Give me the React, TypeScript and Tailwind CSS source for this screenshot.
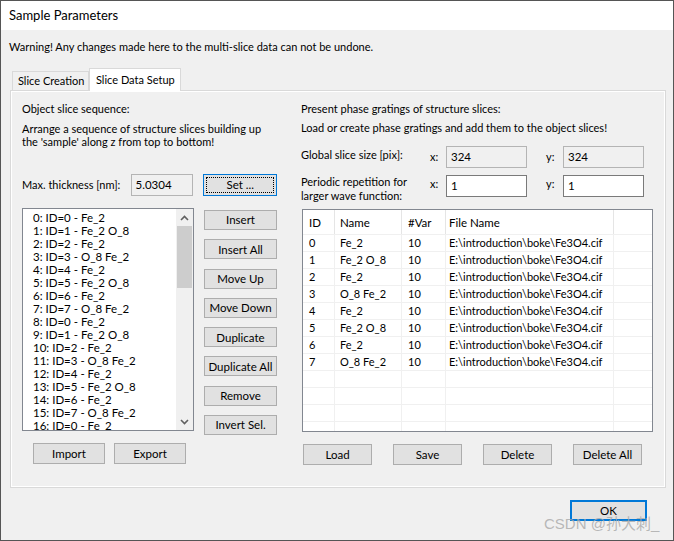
import React from 'react';

const seq = ['Fe_2', 'Fe_2 O_8', 'Fe_2', 'O_8 Fe_2', 'Fe_2', 'Fe_2 O_8', 'Fe_2', 'O_8 Fe_2'];

const sliceItems = Array.from({ length: 17 }, (_, i) => `${i}: ID=${i % 8} - ${seq[i % 8]}`);

const gratings = seq.map((name, i) => ({
  id: i,
  name,
  nvar: 10,
  file: 'E:\\introduction\\boke\\Fe3O4.cif',
}));

const Btn = ({ label, className = '' }: { label: string; className?: string }) => (
  <div
    className={`flex items-center justify-center whitespace-nowrap border border-[#adadad] bg-[#e1e1e1] text-[11.5px] text-black ${className}`}
  >
    {label}
  </div>
);

const Field = ({ value, readOnly = false, className = '' }: { value: string; readOnly?: boolean; className?: string }) => (
  <div
    className={`flex items-center border px-[4px] text-[11.5px] ${
      readOnly ? 'border-[#b4b4b4] bg-[#f0f0f0]' : 'border-[#7a7a7a] bg-white'
    } ${className}`}
  >
    {value}
  </div>
);

const Chevron = ({ up }: { up: boolean }) => (
  <svg width="9" height="6" viewBox="0 0 9 6">
    <path
      d={up ? 'M1 5 L4.5 1.5 L8 5' : 'M1 1 L4.5 4.5 L8 1'}
      fill="none"
      stroke="#606060"
      strokeWidth="1.6"
    />
  </svg>
);

export default function App() {
  return (
    <div className="relative flex h-[541px] w-[674px] flex-col border border-[#555] bg-[#f0f0f0] text-black [font-family:Lato,'Liberation_Sans',sans-serif]">
      {/* title bar */}
      <div className="flex h-[29px] items-center bg-white pl-[8px] text-[13px]">Sample Parameters</div>

      <div className="mt-[9px] whitespace-nowrap pl-[8px] text-[11px] leading-[16px]">
        Warning! Any changes made here to the multi-slice data can not be undone.
      </div>

      {/* tabs */}
      <div className="ml-[11px] mt-[13px] flex items-end whitespace-nowrap text-[11px]">
        <div className="flex h-[19px] w-[77px] items-center border border-b-0 border-[#d9d9d9] pl-[5px]">
          Slice Creation
        </div>
        <div className="relative z-10 -mb-px flex h-[23px] w-[92px] items-center border border-b-0 border-[#d9d9d9] bg-white pl-[6px]">
          Slice Data Setup
        </div>
      </div>

      {/* tab page */}
      <div className="ml-[9px] flex h-[398px] w-[656px] border border-[#d9d9d9] shadow-[inset_1px_1px_0_#fff,inset_-1px_-1px_0_#fff]">
        {/* left column */}
        <div className="ml-[11px] flex w-[255px] flex-col whitespace-nowrap pt-[10px] text-[11px]">
          <div className="leading-[16px]">Object slice sequence:</div>
          <div className="mt-[5px] leading-[13px]">
            Arrange a sequence of structure slices building up
            <br />
            the 'sample' along z from top to bottom!
          </div>
          <div className="mt-[26px] flex items-center">
            <div className="w-[109px]">Max. thickness [nm]:</div>
            <Field value="5.0304" readOnly className="h-[22px] w-[63px]" />
            <div className="ml-[10px] flex h-[22px] w-[74px] items-center justify-center border border-[#0078d7] bg-[#e1e1e1] p-[2px]">
              <div className="flex h-full w-full items-center justify-center border border-dotted border-black text-[11.5px]">
                Set ...
              </div>
            </div>
          </div>

          <div className="mt-[12px] flex h-[223px] items-start">
            <div className="flex h-[223px] w-[172px] border border-[#828790] bg-white">
              <div className="flex-1 overflow-hidden pl-[10px] pt-[2px] text-[11.5px] leading-[13px]">
                {sliceItems.map((s) => (
                  <div key={s} className="whitespace-nowrap">
                    {s}
                  </div>
                ))}
              </div>
              <div className="flex w-[17px] flex-col bg-[#f0f0f0]">
                <div className="flex h-[17px] items-center justify-center">
                  <Chevron up />
                </div>
                <div className="mx-[1px] h-[62px] bg-[#cdcdcd]" />
                <div className="flex-1" />
                <div className="flex h-[17px] items-center justify-center">
                  <Chevron up={false} />
                </div>
              </div>
            </div>
            <div className="ml-[10px] mt-[2px] flex flex-col gap-[9.3px]">
              {['Insert', 'Insert All', 'Move Up', 'Move Down', 'Duplicate', 'Duplicate All', 'Remove', 'Invert Sel.'].map(
                (b) => (
                  <Btn key={b} label={b} className="h-[20px] w-[73px]" />
                ),
              )}
            </div>
          </div>

          <div className="ml-[11px] mt-[12px] flex gap-[9px]">
            <Btn label="Import" className="h-[21px] w-[72px]" />
            <Btn label="Export" className="h-[21px] w-[72px]" />
          </div>
        </div>

        {/* right column */}
        <div className="ml-[24px] flex w-[352px] flex-col whitespace-nowrap pt-[10px] text-[11px]">
          <div className="leading-[16px]">Present phase gratings of structure slices:</div>
          <div className="mt-[3px] leading-[16px]">Load or create phase gratings and add them to the object slices!</div>

          <div className="mt-[10px] flex h-[22px] items-center">
            <div className="-mt-[3px] w-[129px]">Global slice size [pix]:</div>
            <div className="w-[16px]">x:</div>
            <Field value="324" readOnly className="h-[22px] w-[81px]" />
            <div className="ml-[19px] w-[17px]">y:</div>
            <Field value="324" readOnly className="h-[22px] w-[81px]" />
          </div>

          <div className="mt-[7px] flex h-[22px] items-start">
            <div className="w-[129px] leading-[14px]">
              Periodic repetition for
              <br />
              larger wave function:
            </div>
            <div className="mt-[1px] w-[16px]">x:</div>
            <Field value="1" className="h-[22px] w-[81px]" />
            <div className="ml-[19px] mt-[1px] w-[17px]">y:</div>
            <Field value="1" className="h-[22px] w-[81px]" />
          </div>

          <div className="ml-[1px] mt-[12px] h-[223px] w-[351px] overflow-hidden border border-[#828790] bg-white">
            <div className="flex h-[25px] items-center border-b border-[#f0f0f0] text-[11.5px]">
              <div className="h-full w-[32px] border-r border-[#e5e5e5] pl-[6px] leading-[25px]">ID</div>
              <div className="h-full w-[67px] border-r border-[#e5e5e5] pl-[5px] leading-[25px]">Name</div>
              <div className="h-full w-[44px] border-r border-[#e5e5e5] pl-[6px] leading-[25px]">#Var</div>
              <div className="h-full w-[168px] border-r border-[#e5e5e5] pl-[3px] leading-[25px]">File Name</div>
            </div>
            {Array.from({ length: 12 }, (_, i) => {
              const g = gratings[i];
              return (
                <div key={i} className="flex h-[17px] border-b border-[#f0f0f0] text-[11px] leading-[16px]">
                  <div className="w-[32px] border-r border-[#f0f0f0] pl-[6px]">{g ? g.id : ''}</div>
                  <div className="w-[67px] border-r border-[#f0f0f0] pl-[5px]">{g ? g.name : ''}</div>
                  <div className="w-[44px] border-r border-[#f0f0f0] pl-[6px]">{g ? g.nvar : ''}</div>
                  <div className="w-[168px] border-r border-[#f0f0f0] pl-[3px]">{g ? g.file : ''}</div>
                </div>
              );
            })}
          </div>

          <div className="ml-[2px] mt-[12px] flex gap-[21px]">
            <Btn label="Load" className="h-[21px] w-[69px]" />
            <Btn label="Save" className="h-[21px] w-[69px]" />
            <Btn label="Delete" className="h-[21px] w-[69px]" />
            <Btn label="Delete All" className="h-[21px] w-[69px]" />
          </div>
        </div>
      </div>

      {/* OK */}
      <div className="mr-[26px] mt-[12px] flex justify-end">
        <div className="flex h-[21px] w-[77px] items-center justify-center border-2 border-[#0078d7] bg-[#e1e1e1] text-[11.5px]">
          OK
        </div>
      </div>

      {/* watermark */}
      <div className="absolute left-[543px] top-[512px] text-[15px] text-[#a8a8a8]/80 [font-family:'Liberation_Sans','Noto_Sans_CJK_SC',sans-serif]">
        CSDN @孙大刺_
      </div>
    </div>
  );
}
